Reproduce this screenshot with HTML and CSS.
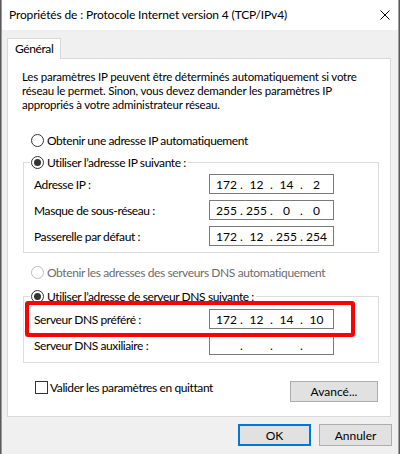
FILE: index.html
```html
<!DOCTYPE html>
<html lang="fr">
<head>
<meta charset="utf-8">
<title>Propriétés de : Protocole Internet version 4 (TCP/IPv4)</title>
<link rel="stylesheet" href="styles.css">
</head>
<body>
<div class="window">
  <div class="titlebar">
    <span class="title">Propriétés de : Protocole Internet version 4 (TCP/IPv4)</span>
    <svg class="close" width="10" height="10" viewBox="0 0 10 10"><path d="M0.5 0.5 L9.5 9.5 M9.5 0.5 L0.5 9.5" stroke="#000" stroke-width="1" fill="none"/></svg>
  </div>
  <div class="client">
    <div class="tabs"><div class="tab">Général</div></div>
    <div class="panel">
      <p class="desc">Les paramètres IP peuvent être déterminés automatiquement si votre<br>réseau le permet. Sinon, vous devez demander les paramètres IP<br>appropriés à votre administrateur réseau.</p>

      <div class="radio r-auto-ip"><span class="rb"></span><span>Obtenir une adresse IP automatiquement</span></div>

      <fieldset class="group g-ip">
        <legend><span class="radio"><span class="rb checked"></span><span>Utiliser l’adresse IP suivante :</span></span></legend>
        <div class="row first">
          <span class="lbl">Adresse IP :</span>
          <span class="ipbox"><span class="oct">172</span><span class="dot">.</span><span class="oct">12</span><span class="dot">.</span><span class="oct">14</span><span class="dot">.</span><span class="oct">2</span></span>
        </div>
        <div class="row">
          <span class="lbl">Masque de sous-réseau :</span>
          <span class="ipbox"><span class="oct">255</span><span class="dot">.</span><span class="oct">255</span><span class="dot">.</span><span class="oct">0</span><span class="dot">.</span><span class="oct">0</span></span>
        </div>
        <div class="row">
          <span class="lbl">Passerelle par défaut :</span>
          <span class="ipbox"><span class="oct">172</span><span class="dot">.</span><span class="oct">12</span><span class="dot">.</span><span class="oct">255</span><span class="dot">.</span><span class="oct">254</span></span>
        </div>
      </fieldset>

      <div class="radio disabled r-auto-dns"><span class="rb"></span><span>Obtenir les adresses des serveurs DNS automatiquement</span></div>

      <fieldset class="group g-dns">
        <legend><span class="radio"><span class="rb checked"></span><span>Utiliser l’adresse de serveur DNS suivante :</span></span></legend>
        <div class="row first highlighted">
          <span class="lbl">Serveur DNS préféré :</span>
          <span class="ipbox"><span class="oct">172</span><span class="dot">.</span><span class="oct">12</span><span class="dot">.</span><span class="oct">14</span><span class="dot">.</span><span class="oct">10</span></span>
          <span class="highlight"></span>
        </div>
        <div class="row">
          <span class="lbl">Serveur DNS auxiliaire :</span>
          <span class="ipbox"><span class="oct"></span><span class="dot">.</span><span class="oct"></span><span class="dot">.</span><span class="oct"></span><span class="dot">.</span><span class="oct"></span></span>
        </div>
      </fieldset>

      <div class="footer">
        <div class="check"><span class="cb"></span><span>Valider les paramètres en quittant</span></div>
        <button class="btn adv">Avancé...</button>
      </div>
    </div>
    <div class="buttons">
      <button class="btn ok">OK</button>
      <button class="btn">Annuler</button>
    </div>
  </div>
</div>
</body>
</html>
```

FILE: styles.css
```css
* { box-sizing: border-box; }

html, body {
  margin: 0;
  padding: 0;
  height: 100%;
  background: #5a5a5a;
  overflow: hidden;
}

body {
  font-family: Lato, "Noto Sans", sans-serif;
  font-size: 12px;
  letter-spacing: -0.4px;
  color: #000;
}

.window {
  margin-left: 1px;
  width: 398px;
  height: 454px;
  border-left: 1px solid #9a9a9a;
  border-right: 1px solid #a0a0a0;
  background: #f0f0f0;
  display: flex;
  flex-direction: column;
}

.titlebar {
  height: 30px;
  background: #fff;
  display: flex;
  align-items: center;
  padding-left: 7px;
  padding-right: 8px;
  flex: none;
}

.title {
  flex: 1;
  font-size: 12px;
  letter-spacing: -0.15px;
  line-height: 16px;
}

.close { display: block; }

.client {
  flex: 1;
  padding: 8px 6px 0 5px;
}

.tabs {
  display: flex;
  height: 20px;
}

.tab {
  position: relative;
  z-index: 1;
  height: 21px;
  background: #fff;
  border: 1px solid #d9d9d9;
  border-bottom: none;
  padding: 0 7px 0 7px;
  line-height: 19px;
}

.panel {
  width: 384px;
  height: 359px;
  background: #fff;
  border: 1px solid #d9d9d9;
  padding: 11px 11px 0 14px;
}

.desc {
  margin: 0;
  font-size: 11.5px;
  letter-spacing: -0.2px;
  line-height: 14px;
}

.radio {
  display: flex;
  align-items: center;
  height: 16px;
  white-space: nowrap;
}

.rb {
  width: 13px;
  height: 13px;
  border: 1px solid #333;
  border-radius: 50%;
  background: #fff;
  margin-right: 3px;
  flex: none;
  display: flex;
  align-items: center;
  justify-content: center;
}

.rb.checked::after {
  content: "";
  width: 7px;
  height: 7px;
  border-radius: 50%;
  background: #333;
}

.radio.disabled { color: #6d6d6d; }
.radio.disabled .rb { border-color: #bcbcbc; }

.r-auto-ip {
  margin: 20px 0 0 9px;
}

.group {
  margin: 6px 0 0 1px;
  width: 356px;
  border: 1px solid #dcdcdc;
  padding: 0 44px 6px 10px;
}

.group legend {
  padding: 0 2px 0 1px;
  margin-left: -4px;
}

.g-dns { padding-bottom: 7px; }

.r-auto-dns {
  margin: 11px 0 0 9px;
}

.g-dns { margin-top: 8px; }

.row {
  display: flex;
  align-items: center;
  justify-content: space-between;
  height: 20px;
  margin-top: 6px;
}

.g-ip .row.first { margin-top: 4px; }
.g-dns .row.first { margin-top: 5px; }

.highlighted { position: relative; }

.highlight {
  position: absolute;
  left: -9px;
  right: -21px;
  top: -8px;
  bottom: -8px;
  border: 4px solid #f00;
  border-radius: 3px;
  pointer-events: none;
}

.ipbox {
  width: 125px;
  height: 20px;
  border: 1px solid #7a7a7a;
  background: #fff;
  display: flex;
  align-items: center;
  padding-left: 5px;
  letter-spacing: 0;
}

.oct {
  width: 23px;
  text-align: center;
}

.dot {
  width: 7px;
  text-align: center;
}

.footer {
  margin-top: 18px;
  display: flex;
  justify-content: space-between;
  align-items: flex-start;
}

.check {
  display: flex;
  align-items: center;
  height: 13px;
  margin-left: 13px;
}

.cb {
  width: 13px;
  height: 13px;
  border: 1px solid #333;
  background: #fff;
  margin-right: 2px;
}

.btn {
  font: inherit;
  letter-spacing: 0;
  color: #000;
  background: #e1e1e1;
  border: 1px solid #adadad;
  border-radius: 0;
  padding: 0;
  margin: 0;
  height: 22px;
  width: 73px;
}

.adv {
  width: 88px;
  height: 21px;
  margin-right: 1px;
}

.buttons {
  display: flex;
  justify-content: flex-end;
  gap: 8px;
  margin-top: 7px;
}

.btn.ok {
  border: 2px solid #0078d7;
}
```
